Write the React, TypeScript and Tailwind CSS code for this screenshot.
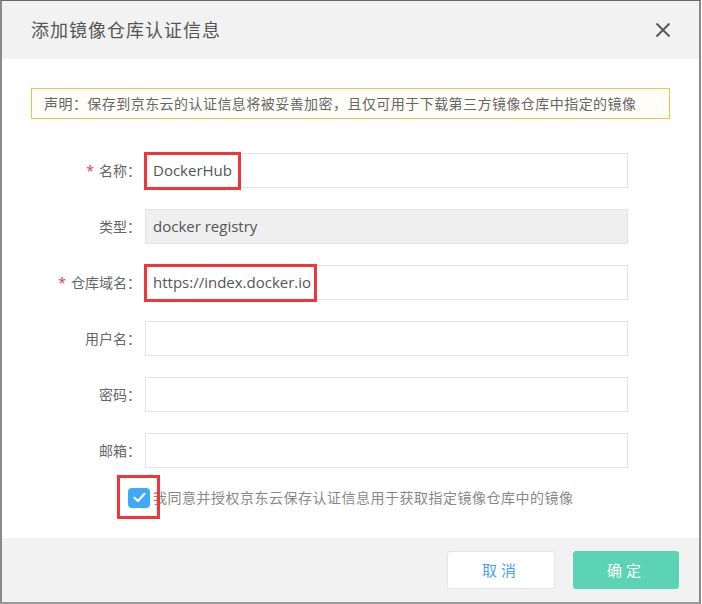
import React from "react";

const fontStack =
  "font-['Open_Sans','Noto_Sans_CJK_SC','Noto_Sans',sans-serif]";

type RowProps = {
  label: string;
  required?: boolean;
  value?: string;
  disabled?: boolean;
  highlight?: string;
};

const FormRow: React.FC<RowProps> = ({ label, required, value, disabled, highlight }) => {
  return (
    <div className="flex items-center h-[35px]">
      <div className="w-[114px] pr-[4px] text-right text-[14px] text-[#666]">
        {required && <span className="text-[#e4393c] mr-[5px]">*</span>}
        {label}：
      </div>
      <div
        className={`relative h-[35px] w-[483px] border border-[#e3e3e3] flex items-center px-[7px] text-[15px] text-[#555] ${
          disabled ? "bg-[#efefef]" : "bg-white"
        }`}
      >
        {value}
        {highlight && (
          <div
            className={`absolute top-[-2px] left-[-2px] h-[38px] border-[3px] border-[#f0353b] ${highlight}`}
          />
        )}
      </div>
    </div>
  );
};

const App: React.FC = () => {
  return (
    <div className={`w-[702px] h-[604px] bg-white ${fontStack}`}>
      <div className="w-[701px] h-[604px] border-t border-t-[#666] border-l-2 border-l-[#8a8a8a] border-r-2 border-r-[#8a8a8a] border-b-2 border-b-[#9a9a9a] flex flex-col">
        {/* header */}
        <div className="h-[58px] bg-[#f2f2f2] flex items-center justify-between pl-[29px] pr-[28px]">
          <div className="text-[18px] text-[#555] tracking-[1px]">添加镜像仓库认证信息</div>
          <svg width="16" height="16" viewBox="0 0 16 16" className="text-[#555]">
            <path d="M1.5 1.5 L14.5 14.5 M14.5 1.5 L1.5 14.5" stroke="currentColor" strokeWidth="1.8" fill="none" />
          </svg>
        </div>

        {/* body */}
        <div className="flex-1 bg-white pl-[29px] pt-[29px]">
          <div className="w-[639px] h-[31px] border border-[#f7c04a] bg-[#fffdf7] flex items-center pl-[12px] text-[14px] text-[#666] tracking-[0.45px]">
            声明：保存到京东云的认证信息将被妥善加密，且仅可用于下载第三方镜像仓库中指定的镜像
          </div>

          <div className="mt-[34px] flex flex-col gap-[21px]">
            <FormRow label="名称" required value="DockerHub" highlight="w-[97px]" />
            <FormRow label="类型" value="docker registry" disabled />
            <FormRow label="仓库域名" required value="https://index.docker.io" highlight="w-[173px]" />
            <FormRow label="用户名" />
            <FormRow label="密码" />
            <FormRow label="邮箱" />
          </div>

          <div className="mt-[19px] flex items-center pl-[97px]">
            <div className="relative w-[22px] h-[20px] rounded-[4px] bg-[#3fa9f5] flex items-center justify-center">
              <svg width="13" height="11" viewBox="0 0 13 11">
                <path d="M1.5 5.8 L5 9 L11.5 1.8" stroke="white" strokeWidth="2.2" fill="none" strokeLinecap="round" strokeLinejoin="round" />
              </svg>
              <div className="absolute left-[-11px] top-[-13px] w-[43px] h-[44px] border-[3px] border-[#f0353b]" />
            </div>
            <div className="ml-[3px] text-[14px] text-[#888] tracking-[0.5px]">
              我同意并授权京东云保存认证信息用于获取指定镜像仓库中的镜像
            </div>
          </div>
        </div>

        {/* footer */}
        <div className="h-[64px] bg-[#f2f2f2] flex justify-end items-start pt-[13px] pr-[20px] gap-[18px]">
          <button className="w-[108px] h-[38px] bg-white border border-[#e1e6ee] rounded-[3px] text-[15px] text-[#4a9ff5] tracking-[4px]">
            取消
          </button>
          <button className="w-[106px] h-[38px] bg-[#5cd3b4] rounded-[3px] text-[15px] text-white tracking-[4px]">
            确定
          </button>
        </div>
      </div>
    </div>
  );
};

export default App;
